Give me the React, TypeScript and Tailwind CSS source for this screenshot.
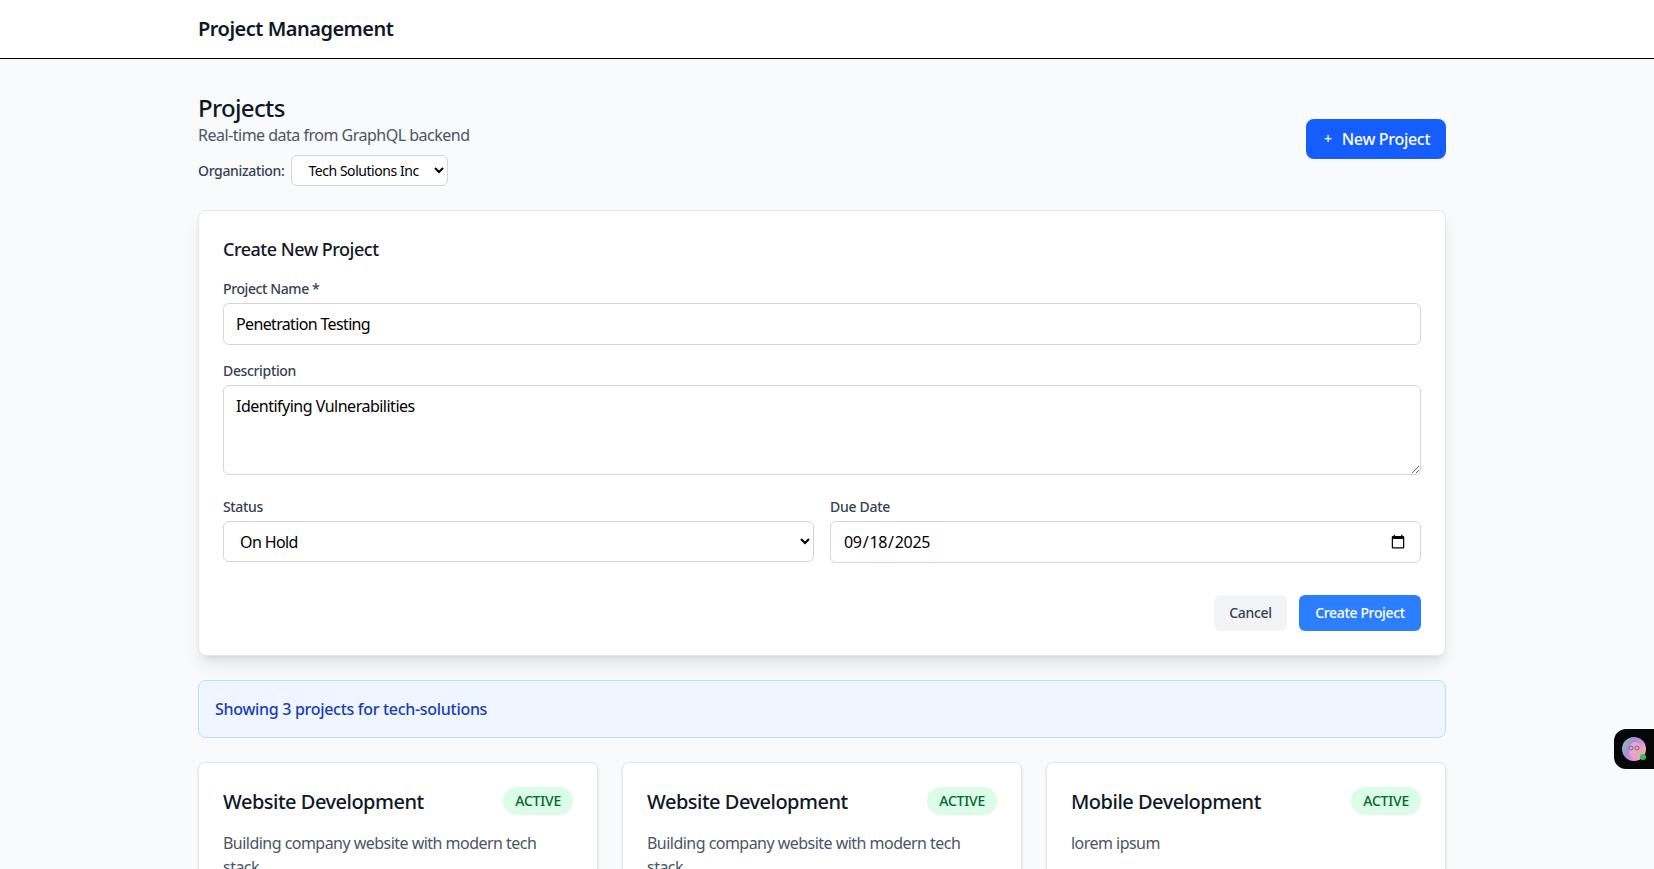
import React from "react";

type Project = { name: string; description: string };

const projects: Project[] = [
  { name: "Website Development", description: "Building company website with modern tech stack" },
  { name: "Website Development", description: "Building company website with modern tech stack" },
  { name: "Mobile Development", description: "lorem ipsum" },
];

const ProjectCard = ({ project }: { project: Project }) => (
  <div className="rounded-lg border border-gray-200 bg-white p-6 shadow-sm">
    <div className="mb-[14px] flex items-start justify-between">
      <h3 className="text-xl leading-[30px] font-medium tracking-[-0.5px] text-gray-900">{project.name}</h3>
      <span className="rounded-full bg-green-100 px-3 py-1 text-sm font-medium tracking-[-0.2px] text-green-800">ACTIVE</span>
    </div>
    <p className="tracking-[-0.53px] text-gray-600">{project.description}</p>
  </div>
);

const AssistantWidget = () => (
  <div className="fixed top-[729px] right-0 flex h-10 w-10 items-center rounded-l-xl bg-[#060606] pl-2">
    <svg width="24" height="24" viewBox="0 0 24 24">
      <defs>
        <linearGradient id="avatar" x1="0" y1="0.2" x2="1" y2="0.8">
          <stop offset="0" stopColor="#7fc9a8" />
          <stop offset="0.35" stopColor="#a98be0" />
          <stop offset="0.7" stopColor="#e59ad0" />
          <stop offset="1" stopColor="#f6c27e" />
        </linearGradient>
      </defs>
      <circle cx="12" cy="12" r="12" fill="url(#avatar)" />
      <ellipse cx="13" cy="13" rx="6" ry="8" fill="#e8a6c4" />
      <circle cx="9" cy="11" r="2" fill="none" stroke="#5d5a80" strokeWidth="0.8" />
      <circle cx="15" cy="11" r="2" fill="none" stroke="#5d5a80" strokeWidth="0.8" />
      <circle cx="21" cy="20" r="3" fill="#22c55e" />
    </svg>
  </div>
);

export default function App() {
  return (
    <div className="h-screen overflow-hidden bg-gray-50 font-['Noto_Sans',sans-serif]">
      {/* HEADER */}
      <header className="h-[59px] border-b border-black bg-white">
        <div className="mx-[198px] flex h-[58px] items-center">
          <h1 className="text-xl font-semibold tracking-[-0.5px] text-gray-900">Project Management</h1>
        </div>
      </header>

      <main className="mx-[198px] w-[1248px] py-8">
        {/* TITLE ROW */}
        <div className="mb-6 flex items-center justify-between">
          <div>
            <h2 className="mb-[-2px] text-2xl leading-[34px] font-medium tracking-[-0.65px] text-gray-900">Projects</h2>
            <p className="tracking-[-0.5px] text-gray-600">Real-time data from GraphQL backend</p>
            <div className="mt-2 flex items-center gap-[7px]">
              <label className="text-sm font-medium tracking-[-0.35px] text-gray-700">Organization:</label>
              <select
                defaultValue="tech"
                className="h-[31px] w-[157px] rounded-md border border-gray-300 bg-white px-3 text-sm tracking-[-0.45px] text-black"
              >
                <option value="tech">Tech Solutions Inc</option>
              </select>
            </div>
          </div>
          <button className="flex h-10 w-[140px] items-center gap-[10px] rounded-lg bg-blue-600 pl-[18px] font-medium tracking-[-0.3px] text-white">
            <span className="text-sm">+</span>
            New Project
          </button>
        </div>

        {/* CREATE FORM */}
        <div className="mb-6 rounded-lg border border-gray-200 bg-white p-6 shadow-lg">
          <h3 className="mb-4 text-lg font-medium tracking-[-0.5px] text-gray-900">Create New Project</h3>
          <label className="mb-1 block text-sm font-medium tracking-[-0.4px] text-gray-700">Project Name *</label>
          <input
            defaultValue="Penetration Testing"
            className="mb-4 block h-[42px] w-full rounded-md border border-gray-300 px-3 tracking-[-0.65px] text-black"
          />
          <label className="mb-1 block text-sm font-medium tracking-[-0.35px] text-gray-700">Description</label>
          <textarea
            defaultValue="Identifying Vulnerabilities"
            className="mb-[22px] block h-[90px] w-full rounded-md border border-gray-300 px-3 py-2 tracking-[-0.5px] text-black"
          />
          <div className="mb-8 grid grid-cols-2 gap-4">
            <div>
              <label className="mb-1 block text-sm font-medium tracking-[-0.35px] text-gray-700">Status</label>
              <select
                defaultValue="hold"
                className="block h-[41px] w-full rounded-md border border-gray-300 bg-white px-3 tracking-[-0.6px] text-black"
              >
                <option value="active">Active</option>
                <option value="hold">On Hold</option>
              </select>
            </div>
            <div>
              <label className="mb-1 block text-sm font-medium tracking-[-0.3px] text-gray-700">Due Date</label>
              <input
                type="date"
                defaultValue="2025-09-18"
                className="block h-[42px] w-full rounded-md border border-gray-300 px-3 tracking-[-0.3px] text-black"
              />
            </div>
          </div>
          <div className="flex justify-end gap-3">
            <button className="h-9 w-[73px] rounded-md bg-gray-100 text-sm font-medium tracking-[-0.3px] text-gray-700">Cancel</button>
            <button className="h-9 w-[122px] rounded-md bg-blue-500 text-sm font-medium tracking-[-0.35px] text-white">Create Project</button>
          </div>
        </div>

        {/* INFO BAR */}
        <div className="mb-6 rounded-lg border border-blue-200 bg-blue-50 p-4 font-medium tracking-[-0.3px] text-blue-800">
          Showing 3 projects for tech-solutions
        </div>

        {/* PROJECT CARDS */}
        <div className="grid grid-cols-3 gap-6">
          {projects.map((project, i) => (
            <ProjectCard key={i} project={project} />
          ))}
        </div>
      </main>

      <AssistantWidget />
    </div>
  );
}
